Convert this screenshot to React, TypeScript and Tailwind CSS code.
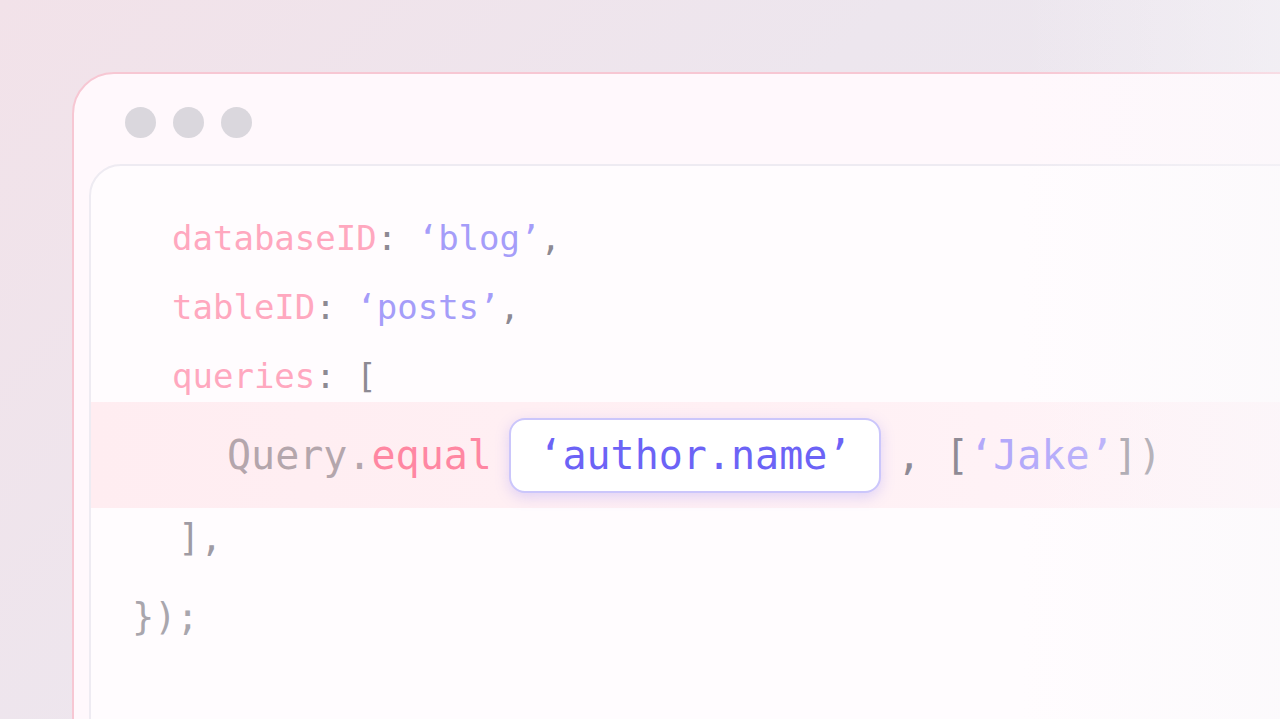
import React from "react";

const mono = { fontFamily: '"DejaVu Sans Mono", "Liberation Mono", monospace' };

export default function App() {
  return (
    <div
      className="relative w-[1280px] h-[719px] overflow-hidden bg-[linear-gradient(135deg,#f2e2e9_0%,#ede6ee_45%,#ebe9f0_100%)]"
      style={mono}
    >
      <div className="absolute left-[72px] top-[72px] w-[1300px] h-[760px] rounded-[42px] border-2 border-[#f7c7d3] bg-[#fff8fc] flex flex-col">
        <div className="h-[90px] flex items-center gap-[17px] pl-[51px] pt-[6px]">
          <div className="w-[31px] h-[31px] rounded-full bg-[#dad7dd]" />
          <div className="w-[31px] h-[31px] rounded-full bg-[#dad7dd]" />
          <div className="w-[31px] h-[31px] rounded-full bg-[#dad7dd]" />
        </div>
        <div className="ml-[15px] flex-1 rounded-tl-[32px] border-2 border-[#eeebf2] bg-[#fffcfe] pt-[37px] flex flex-col">
          <div className="h-[69px] flex items-center pl-[81px] text-[34px] leading-none">
            <span className="text-[#ffa8bf]">databaseID</span>
            <span className="text-[#8d8a93]">:</span>
            <span className="text-[#a59df9]">&nbsp;‘blog’</span>
            <span className="text-[#8d8a93]">,</span>
          </div>
          <div className="h-[69px] flex items-center pl-[81px] text-[34px] leading-none">
            <span className="text-[#ffa8bf]">tableID</span>
            <span className="text-[#8d8a93]">:</span>
            <span className="text-[#a59df9]">&nbsp;‘posts’</span>
            <span className="text-[#8d8a93]">,</span>
          </div>
          <div className="h-[61px] pt-[8px] flex items-center pl-[81px] text-[34px] leading-none">
            <span className="text-[#ffa8bf]">queries</span>
            <span className="text-[#8d8a93]">:&nbsp;[</span>
          </div>
          <div className="h-[106px] flex items-center pl-[136px] text-[40px] leading-none bg-[linear-gradient(90deg,#ffedf1_0%,#fff0f4_50%,#fff5f9_100%)]">
            <span className="text-[#b4a6ac]">Query.</span>
            <span className="text-[#ff87a2]">equal</span>
            <div className="ml-[17px] h-[75px] w-[372px] flex items-center justify-center rounded-[16px] border-2 border-[#cbc6fb] bg-white shadow-[0_4px_14px_rgba(140,128,250,0.28)]">
              <span className="text-[#6c63f6]">‘author.name’</span>
            </div>
            <span className="ml-[16px] text-[#8f8b95]">,&nbsp;[</span>
            <span className="text-[#b3a9fa]">‘Jake’</span>
            <span className="text-[#a29ea7]">])</span>
          </div>
          <div className="h-[60px] flex items-center pl-[87px] text-[37px] leading-none text-[#9f9ba4]">
            ],
          </div>
          <div className="h-[98px] flex items-center pl-[41px] text-[37px] leading-none text-[#a9a6ad]">
            {"});"}
          </div>
        </div>
      </div>
      <div className="absolute right-0 top-0 w-[260px] h-[719px] bg-[linear-gradient(90deg,rgba(250,249,252,0)_0%,rgba(248,247,250,0.45)_100%)] pointer-events-none" />
    </div>
  );
}
